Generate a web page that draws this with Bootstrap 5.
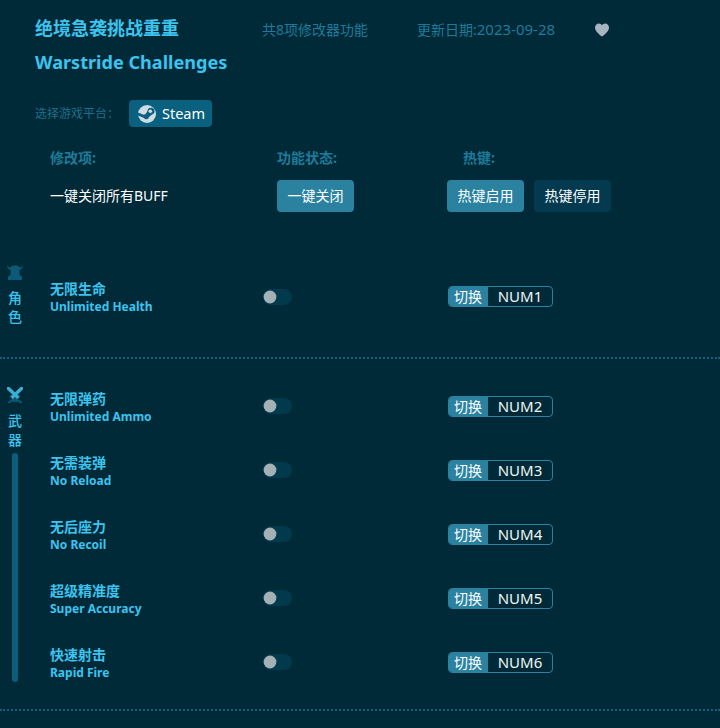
<!DOCTYPE html>
<html lang="zh">
<head>
<meta charset="utf-8">
<title>绝境急袭挑战重重</title>
<link href="https://cdn.jsdelivr.net/npm/bootstrap@5.3.0/dist/css/bootstrap.min.css" rel="stylesheet">
<style>
html,body{height:728px;overflow:hidden}
body{background:#012a38;font-family:"Noto Sans","Noto Sans CJK SC",sans-serif;font-size:14px;color:#fff;line-height:1.3}
.head-top{padding:18px 0 0 35px;height:100px}
.title-line{height:21px}
.game-title{font-size:18px;font-weight:700;color:#3cc3ee;line-height:21px;margin:0}
.game-title-cn{width:144px}
.game-sub{margin-top:13px;font-size:18.1px}
.meta-line{font-size:14px;color:#1f7a99;line-height:21px;padding-top:2px}
.meta-a{margin-left:83px;width:155px}
.meta-b{width:178px}
.meta-num{font-size:15px}
.heart-ico{width:14px;height:14px;fill:#a6b5bf;margin-top:2px}
.plat-row{padding-left:35px;height:27px;margin-top:0}
.plat-label{font-size:12px;color:#1f6e8a;width:94px}
.plat-colon{font-family:"Noto Sans CJK TC",sans-serif}
.steam-chip{background:#0a617f;height:27px;width:83px;border-radius:4px;padding:0 0 0 9px;gap:6px;font-size:14.5px;color:#fff}
.col-heads{padding:21px 0 0 50px;height:52px;font-weight:700;color:#1f7a99;line-height:19px}
.col-h1{width:227px}
.col-h2{width:186px}
.all-row{padding-left:50px;height:32px;margin-top:1px}
.all-label{width:227px}
.act-btn{width:77px;height:32px;padding:0;border:0;border-radius:4px;background:#2a82a0;color:#fff;font-size:14px;line-height:32px}
.act-btn:hover{background:#2a82a0;color:#fff}
.act-dark{background:#033a4f;margin-left:10px}
.act-dark:hover{background:#033a4f}
.hot-wrap{margin-left:93px}
.sect{border-bottom:2px dotted #14607a}
.sect-one{margin-top:37px;height:110px;padding-top:16px}
.sect-two{height:352px;padding-top:16px}
.rail{width:30px;flex:none;color:#3cc3ee;font-size:14px;font-weight:500;line-height:19px}
.rail-ico{width:16px;height:16px;display:block;margin-bottom:8px}
.sect-one .rail-ico{margin-top:-1px}
.sect-two .rail-ico{margin-top:12px}
.rail-bar{width:6px;flex:1;background:#0c5f7a;border-radius:3px;margin-top:4px;margin-bottom:27px}
.mod-row{height:64px;padding-left:20px}
.mod-name{width:213px;flex:none;line-height:17px;color:#3cc3ee}
.mod-cn{font-size:14px;font-weight:700}
.mod-en{font-size:12px;font-weight:700;margin-top:1px}
.tog-cell{width:185px;flex:none}
.tog-cell .form-check-input{width:29px;height:16px;margin:0;border:0;background-color:#013a4d;box-shadow:none;background-image:url("data:image/svg+xml,%3csvg xmlns='http://www.w3.org/2000/svg' viewBox='-4 -4 8 8'%3e%3ccircle r='3.2' fill='%23a3b0b6'/%3e%3c/svg%3e");background-position:-1px center}
.sect-two .tog-cell .form-check-input{margin-top:-2px}
.tog-cell.form-switch{padding-left:0;min-height:0;margin:0}
.key-box{width:105px;height:21px;border-radius:4px;border:1px solid #2a82a0;font-size:14px;line-height:19px;overflow:hidden;margin-top:-2px}
.key-tag{width:40px;background:#2a82a0;color:#fff;flex:none;text-align:center;margin-left:-1px}
.key-val{flex:1;text-align:center;color:#eef5f7;font-size:15px}
</style>
</head>
<body>
<div class="head-top">
  <div class="title-line d-flex align-items-center">
    <h1 class="game-title game-title-cn">绝境急袭挑战重重</h1>
    <div class="meta-line meta-a">共8项修改器功能</div>
    <div class="meta-line meta-b">更新日期:<span class="meta-num">2023-09-28</span></div>
    <svg class="heart-ico" viewBox="0 0 16 15"><path d="M8 15 C3 11 0 8 0 4.5 C0 2 2 0 4.300 0 C5.800 0 7.200 .8 8 2.200 C8.800 .8 10.200 0 11.700 0 C14 0 16 2 16 4.500 C16 8 13 11 8 15Z"/></svg>
  </div>
  <div class="game-title game-sub">Warstride Challenges</div>
</div>
<div class="plat-row d-flex align-items-center">
  <span class="plat-label">选择游戏平台<span class="plat-colon">：</span></span>
  <div class="steam-chip d-flex align-items-center">
    <svg width="18" height="18" viewBox="0 0 18 18"><circle cx="9" cy="9" r="9" fill="#cfdce6"/><path d="M0 10.500 L6 13 A2.700 2.700 0 0 0 11 12 L14 9.500 A3.500 3.500 0 1 0 9.500 6 L7.500 9.300 A2.800 2.800 0 0 0 5.500 9.800 L0 7.500Z" fill="#0a617f"/><circle cx="12.300" cy="6.300" r="1.800" fill="#cfdce6"/></svg>
    <span>Steam</span>
  </div>
</div>
<div class="col-heads d-flex">
  <span class="col-h1">修改项:</span>
  <span class="col-h2">功能状态:</span>
  <span>热键:</span>
</div>
<div class="all-row d-flex align-items-center">
  <span class="all-label">一键关闭所有BUFF</span>
  <button class="btn act-btn" type="button">一键关闭</button>
  <div class="hot-wrap d-flex">
    <button class="btn act-btn" type="button">热键启用</button>
    <button class="btn act-btn act-dark" type="button">热键停用</button>
  </div>
</div>

<section class="sect sect-one d-flex">
  <div class="rail d-flex flex-column align-items-center">
    <svg class="rail-ico" viewBox="0 0 16 16"><path d="M0 0 C.3 2 1 3.200 3.500 3.500 C4 2 5.500 1.500 8 1.500 C10.500 1.500 12 2 12.500 3.500 C15 3.200 15.700 2 16 0 C16.300 3 15 5.500 12.500 5.800 L12.500 11 L15 12.500 L15 16 L1 16 L1 12.500 L3.500 11 L3.500 5.800 C1 5.500 -.3 3 0 0Z" fill="#0c5a75"/></svg>
    <span>角</span><span>色</span>
  </div>
  <div class="flex-grow-1">
    <div class="mod-row d-flex align-items-center">
      <div class="mod-name"><div class="mod-cn">无限生命</div><div class="mod-en">Unlimited Health</div></div>
      <div class="tog-cell form-check form-switch d-flex"><input class="form-check-input" type="checkbox" aria-label="无限生命"></div>
      <div class="key-box d-flex"><span class="key-tag">切换</span><span class="key-val">NUM1</span></div>
    </div>
  </div>
</section>

<section class="sect sect-two d-flex">
  <div class="rail d-flex flex-column align-items-center">
    <svg class="rail-ico" viewBox="0 0 16 16"><g fill="none" stroke-linecap="square"><path d="M9 12 L14 15.500 M7 12 L2 15.500 M4 9.500 L7 14 M12 9.500 L9 14" stroke="#0c5a75" stroke-width="2"/><path d="M1.500 1.500 L10 9.500 M14.500 1.500 L6 9.500" stroke="#3aaed2" stroke-width="3.500"/></g></svg>
    <span>武</span><span>器</span>
    <div class="rail-bar"></div>
  </div>
  <div class="flex-grow-1">
    <div class="mod-row d-flex align-items-center">
      <div class="mod-name"><div class="mod-cn">无限弹药</div><div class="mod-en">Unlimited Ammo</div></div>
      <div class="tog-cell form-check form-switch d-flex"><input class="form-check-input" type="checkbox" aria-label="无限弹药"></div>
      <div class="key-box d-flex"><span class="key-tag">切换</span><span class="key-val">NUM2</span></div>
    </div>
    <div class="mod-row d-flex align-items-center">
      <div class="mod-name"><div class="mod-cn">无需装弹</div><div class="mod-en">No Reload</div></div>
      <div class="tog-cell form-check form-switch d-flex"><input class="form-check-input" type="checkbox" aria-label="无需装弹"></div>
      <div class="key-box d-flex"><span class="key-tag">切换</span><span class="key-val">NUM3</span></div>
    </div>
    <div class="mod-row d-flex align-items-center">
      <div class="mod-name"><div class="mod-cn">无后座力</div><div class="mod-en">No Recoil</div></div>
      <div class="tog-cell form-check form-switch d-flex"><input class="form-check-input" type="checkbox" aria-label="无后座力"></div>
      <div class="key-box d-flex"><span class="key-tag">切换</span><span class="key-val">NUM4</span></div>
    </div>
    <div class="mod-row d-flex align-items-center">
      <div class="mod-name"><div class="mod-cn">超级精准度</div><div class="mod-en">Super Accuracy</div></div>
      <div class="tog-cell form-check form-switch d-flex"><input class="form-check-input" type="checkbox" aria-label="超级精准度"></div>
      <div class="key-box d-flex"><span class="key-tag">切换</span><span class="key-val">NUM5</span></div>
    </div>
    <div class="mod-row d-flex align-items-center">
      <div class="mod-name"><div class="mod-cn">快速射击</div><div class="mod-en">Rapid Fire</div></div>
      <div class="tog-cell form-check form-switch d-flex"><input class="form-check-input" type="checkbox" aria-label="快速射击"></div>
      <div class="key-box d-flex"><span class="key-tag">切换</span><span class="key-val">NUM6</span></div>
    </div>
  </div>
</section>
<script src="https://cdn.jsdelivr.net/npm/bootstrap@5.3.0/dist/js/bootstrap.bundle.min.js"></script>
</body>
</html>
